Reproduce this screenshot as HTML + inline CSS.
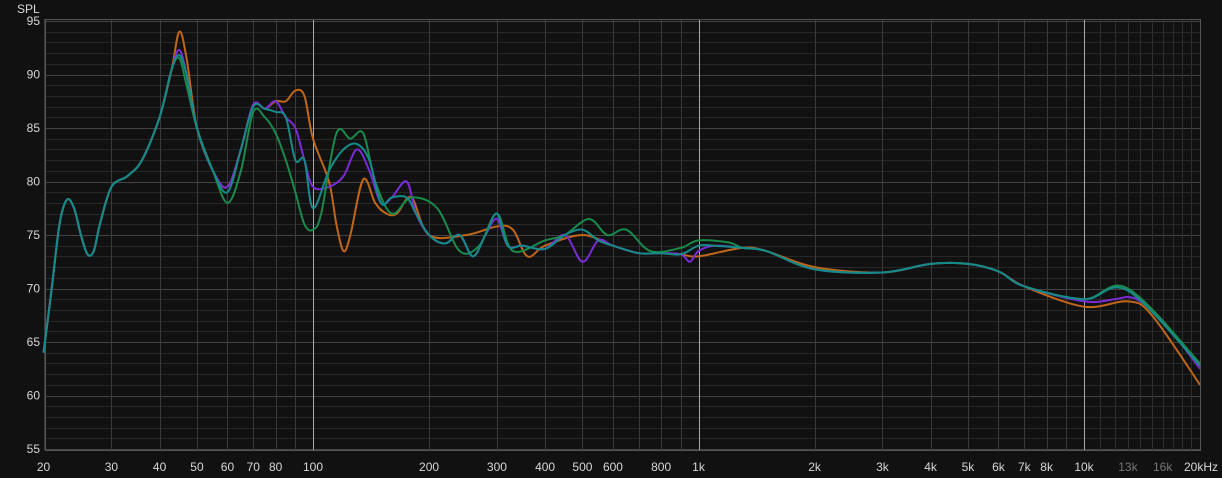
<!DOCTYPE html><html><head><meta charset="utf-8"><style>
html,body{margin:0;padding:0;background:#111;width:1222px;height:478px;overflow:hidden}
svg{display:block}
text{font-family:"Liberation Sans",sans-serif;font-size:12px;fill:#d8d8d8}
</style></head><body>
<svg id="s" width="1222" height="478" xmlns="http://www.w3.org/2000/svg">
<rect width="1222" height="478" fill="#111"/>
<g id="grid"></g><g id="curves"></g><g id="labels"></g>
<text x="17" y="13">SPL</text>
</svg>
<script>
const L=45,R=1200,T=19,B=450;
const X=f=>313+385.5*Math.log10(f/100);
const Y=d=>21+(95-d)*10.7;
const NS="http://www.w3.org/2000/svg";
function el(p,t,a,txt){const e=document.createElementNS(NS,t);for(const k in a)e.setAttribute(k,a[k]);if(txt!==undefined)e.textContent=txt;document.getElementById(p).appendChild(e);return e;}
for(let d=55;d<=95;d++){const y=Math.round(Y(d))+0.5;el('grid','line',{x1:L,x2:R,y1:y,y2:y,stroke:d%5==0?'#444':'#282828','stroke-width':1});}
let fs=[];
for(let dec of [10,100,1000]){for(let m=1;m<10;m++){let f=m*dec;if(f>=20)fs.push(f);}}
fs.push(10000);for(let k=11;k<=20;k++)fs.push(k*1000);
for(const f of fs){const x=Math.round(X(f))+0.5;let c=(f==100||f==1000||f==10000)?'#aaa':(f>10000?'#2e2e2e':'#3a3a3a');el('grid','line',{x1:x,x2:x,y1:T,y2:B,stroke:c,'stroke-width':1});}
el('grid','rect',{x:L+.5,y:T+.5,width:R-L,height:B-T,fill:'none',stroke:'#555'});
for(let d=55;d<=95;d+=5)el('labels','text',{x:40,y:Y(d)+4,'text-anchor':'end'},d);
const xl=[[20,'20'],[30,'30'],[40,'40'],[50,'50'],[60,'60'],[70,'70'],[80,'80'],[100,'100'],[200,'200'],[300,'300'],[400,'400'],[500,'500'],[600,'600'],[800,'800'],[1000,'1k'],[2000,'2k'],[3000,'3k'],[4000,'4k'],[5000,'5k'],[6000,'6k'],[7000,'7k'],[8000,'8k'],[10000,'10k'],[13000,'13k'],[16000,'16k']];
for(const [f,t] of xl){const e=el('labels','text',{x:X(f),y:471,'text-anchor':'middle'},t);if(f>10000)e.setAttribute('style','fill:#777');}
el('labels','text',{x:1218,y:471,'text-anchor':'end'},'20kHz');
const base={20:64,21:70,22:76,23:78.3,24:77.5,25:75,26:73.2,27:73.5,28:76,30:79.5,33:80.5,36:82,40:86,43:90.5,45:92.3,47:90,50:85,55:81,60:79.5,65:83,70:87.2,75:86.8,80:87.5,85:86,90:85,95:82,100:79.5,110:79.5,120:80.5,130:83,140:81,150:78,160:78.5,175:80,185:77,200:75,220:74.2,240:75,260:73,280:75,300:76.5,320:74,350:74,400:73.7,450:75,500:72.5,550:74.5,600:74,700:73.3,800:73.3,900:73.2,950:72.5,1000:73.5,1100:74,1300:73.8,1500:73.5,2000:71.8,3000:71.5,4000:72.3,5000:72.3,6000:71.6,7000:70.2,10000:68.8,12000:69,13000:69.2,14000:68.8,16000:67,20000:62.5};
function mk(over,rm){const o=Object.assign({},base);(rm||[]).forEach(k=>delete o[k]);Object.assign(o,over);return Object.keys(o).map(Number).sort((a,b)=>a-b).map(f=>[X(f),Y(o[f])]);}
function path(p){let d=`M${p[0][0]},${p[0][1]}`;for(let i=0;i<p.length-1;i++){const p0=p[i-1]||p[i],p1=p[i],p2=p[i+1],p3=p[i+2]||p2;const c1=[p1[0]+(p2[0]-p0[0])/6,p1[1]+(p2[1]-p0[1])/6],c2=[p2[0]-(p3[0]-p1[0])/6,p2[1]-(p3[1]-p1[1])/6];d+=`C${c1[0]},${c1[1]} ${c2[0]},${c2[1]} ${p2[0]},${p2[1]}`;}return d;}
const curves=[
['#c0661a',mk({45:94,47:91.5,85:87.5,90:88.5,95:88,100:84,110:80,115:76,120:73.5,125:75,135:80.2,145:78,155:77,165:77,180:78.5,200:75,250:75,300:75.8,330:75.5,360:73,400:74,500:75,600:74,1000:73,2000:72,10000:68.3,13000:68.8,15000:67.5,20000:61},[110,130,140,150,160,175,185,220,240,260,280,320,350,450,550,950,1100,12000,13000,14000,16000])],
['#7a2bd6',mk({})],
['#1a8a4a',mk({45:91.5,47:89,60:78,65:81,70:86.5,75:86,80:84.5,85:82,90:79,95:76,100:75.5,105:77,115:84.5,125:84,135:84.5,145:80,160:77,180:78.5,210:77.5,240:73.5,270:74,300:77,330:73.5,400:74.5,450:75,520:76.5,580:75,650:75.5,750:73.5,900:73.8,1000:74.5,1200:74.3,10000:69,13000:70,20000:63},[110,120,130,140,150,175,185,200,220,260,280,320,350,500,550,600,700,800,950,1100,12000,14000,16000])],
['#168a8a',mk({45:91.8,60:79,70:87,80:86.5,90:82,100:77.5,110:81,120:83,130:83.5,140:82,150:78,175:78.5,300:77,500:75.5,1000:74,10000:69,13000:69.8,20000:62.8},[12000,14000,16000,950])]
];
for(const [c,p] of curves)el('curves','path',{d:path(p),fill:'none',stroke:c,'stroke-width':2});
</script>
</body></html>
